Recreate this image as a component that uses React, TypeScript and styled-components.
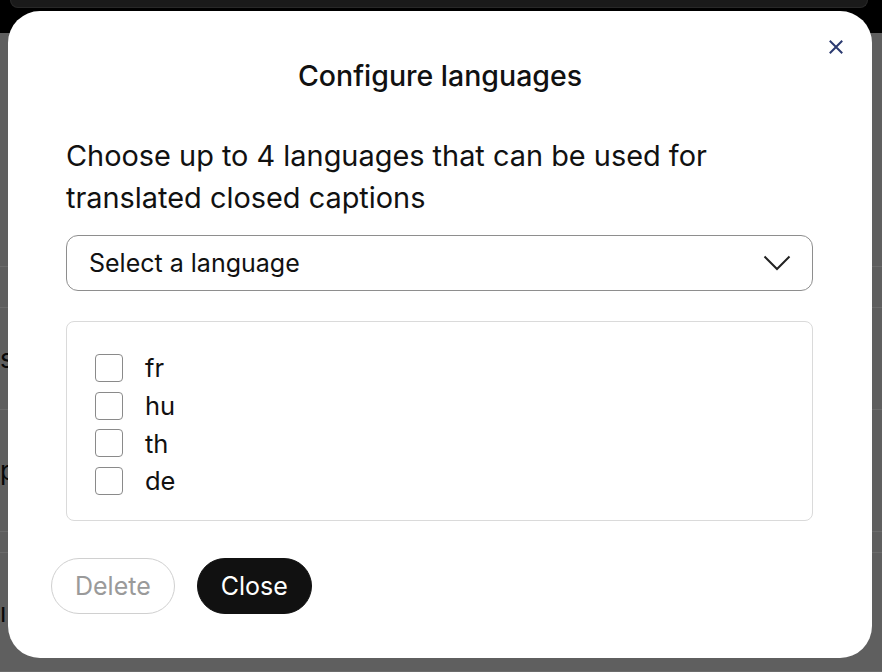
import React from "react";
import styled, { createGlobalStyle } from "styled-components";

const GlobalStyle = createGlobalStyle`
  * { box-sizing: border-box; }
  html, body {
    margin: 0;
    padding: 0;
    height: 100%;
    overflow: hidden;
  }
  body {
    font-family: Inter, "Noto Sans", sans-serif;
    background: #d2d2d2;
    color: #111;
  }
`;

/* page behind the dialog */
const Page = styled.div`
  width: 882px;
  height: 672px;
  display: flex;
  flex-direction: column;
  background: #d2d2d2;
`;

const TopBar = styled.header`
  height: 33px;
  background: #000;
  padding: 0 14px 0 10px;
`;

const TopBarInner = styled.div`
  height: 8px;
  background: #3b3b3b;
  border: 1px solid #5a5a5a;
  border-top: none;
  border-radius: 0 0 10px 10px;
`;

const Row = styled.div<{ h: number }>`
  height: ${(p) => p.h}px;
  border-bottom: 1px solid #efefef;
  display: flex;
  align-items: center;
  font-size: 26px;
  color: #111;
  overflow: hidden;
`;

const Backdrop = styled.div`
  position: fixed;
  inset: 0;
  background: rgba(0, 0, 0, 0.55);
`;

/* dialog */
const Dialog = styled.div`
  position: fixed;
  left: 8px;
  top: 11px;
  width: 864px;
  height: 647px;
  background: #fff;
  border-radius: 32px;
  padding: 48px 43px 0;
  display: flex;
  flex-direction: column;
`;

const CloseIcon = styled.button`
  position: absolute;
  top: 24px;
  right: 24px;
  width: 24px;
  height: 24px;
  border: none;
  background: none;
  padding: 0;
  display: flex;
  align-items: center;
  justify-content: center;
  color: #2b3a70;
  cursor: pointer;
`;

const Title = styled.h2`
  margin: 0;
  font-size: 28.5px;
  line-height: 34px;
  font-weight: 500;
  text-align: center;
  color: #111;
`;

const Body = styled.div`
  padding: 0 16px 0 15px;
  display: flex;
  flex-direction: column;
`;

const Intro = styled.p`
  margin: 42px 0 0;
  font-size: 28.9px;
  line-height: 42px;
  font-weight: 400;
  color: #111;
`;

const Select = styled.div`
  margin-top: 16px;
  height: 56px;
  border: 1px solid #8e8e8e;
  border-radius: 12px;
  padding: 0 21px 0 22px;
  display: flex;
  align-items: center;
  justify-content: space-between;
  font-size: 25px;
  color: #111;
`;

const LanguageList = styled.div`
  margin-top: 30px;
  height: 200px;
  border: 1px solid #dadada;
  border-radius: 8px;
  padding: 27px 28px 0;
  display: flex;
  flex-direction: column;
`;

const Option = styled.label`
  height: 37.7px;
  display: flex;
  align-items: center;
  gap: 22px;
  font-size: 25.5px;
  color: #111;
`;

const Box = styled.span`
  width: 28px;
  height: 28px;
  border: 1px solid #8a8a8a;
  border-radius: 4px;
  background: #fff;
`;

const Footer = styled.div`
  margin-top: 37px;
  display: flex;
  gap: 22px;
`;

const Button = styled.button<{ primary?: boolean }>`
  height: 56px;
  padding: 0 23px;
  border-radius: 28px;
  font-family: Inter, "Noto Sans", sans-serif;
  font-size: 25px;
  font-weight: 400;
  border: 1px solid ${(p) => (p.primary ? "#111" : "#d0d0d0")};
  background: ${(p) => (p.primary ? "#111" : "#fff")};
  color: ${(p) => (p.primary ? "#fff" : "#9a9a9a")};
`;

const languages = ["fr", "hu", "th", "de"];

export default function App() {
  return (
    <>
      <GlobalStyle />
      <Page>
        <TopBar>
          <TopBarInner />
        </TopBar>
        <Row h={234} />
        <Row h={41} />
        <Row h={102}>s</Row>
        <Row h={122}>p</Row>
        <Row h={21} />
        <Row h={119}>ı</Row>
      </Page>
      <Backdrop />
      <Dialog role="dialog">
        <CloseIcon aria-label="Close">
          <svg width="14" height="14" viewBox="0 0 14 14">
            <path
              d="M1.5 1.5 L12.5 12.5 M12.5 1.5 L1.5 12.5"
              stroke="currentColor"
              strokeWidth="2"
              strokeLinecap="square"
            />
          </svg>
        </CloseIcon>
        <Title>Configure languages</Title>
        <Body>
          <Intro>
            Choose up to 4 languages that can be used for translated closed
            captions
          </Intro>
          <Select>
            <span>Select a language</span>
            <svg width="28" height="16" viewBox="0 0 28 16">
              <path
                d="M1.5 1.5 L14 14 L26.5 1.5"
                fill="none"
                stroke="#222"
                strokeWidth="2"
              />
            </svg>
          </Select>
          <LanguageList>
            {languages.map((lang) => (
              <Option key={lang}>
                <Box />
                {lang}
              </Option>
            ))}
          </LanguageList>
        </Body>
        <Footer>
          <Button>Delete</Button>
          <Button primary>Close</Button>
        </Footer>
      </Dialog>
    </>
  );
}
